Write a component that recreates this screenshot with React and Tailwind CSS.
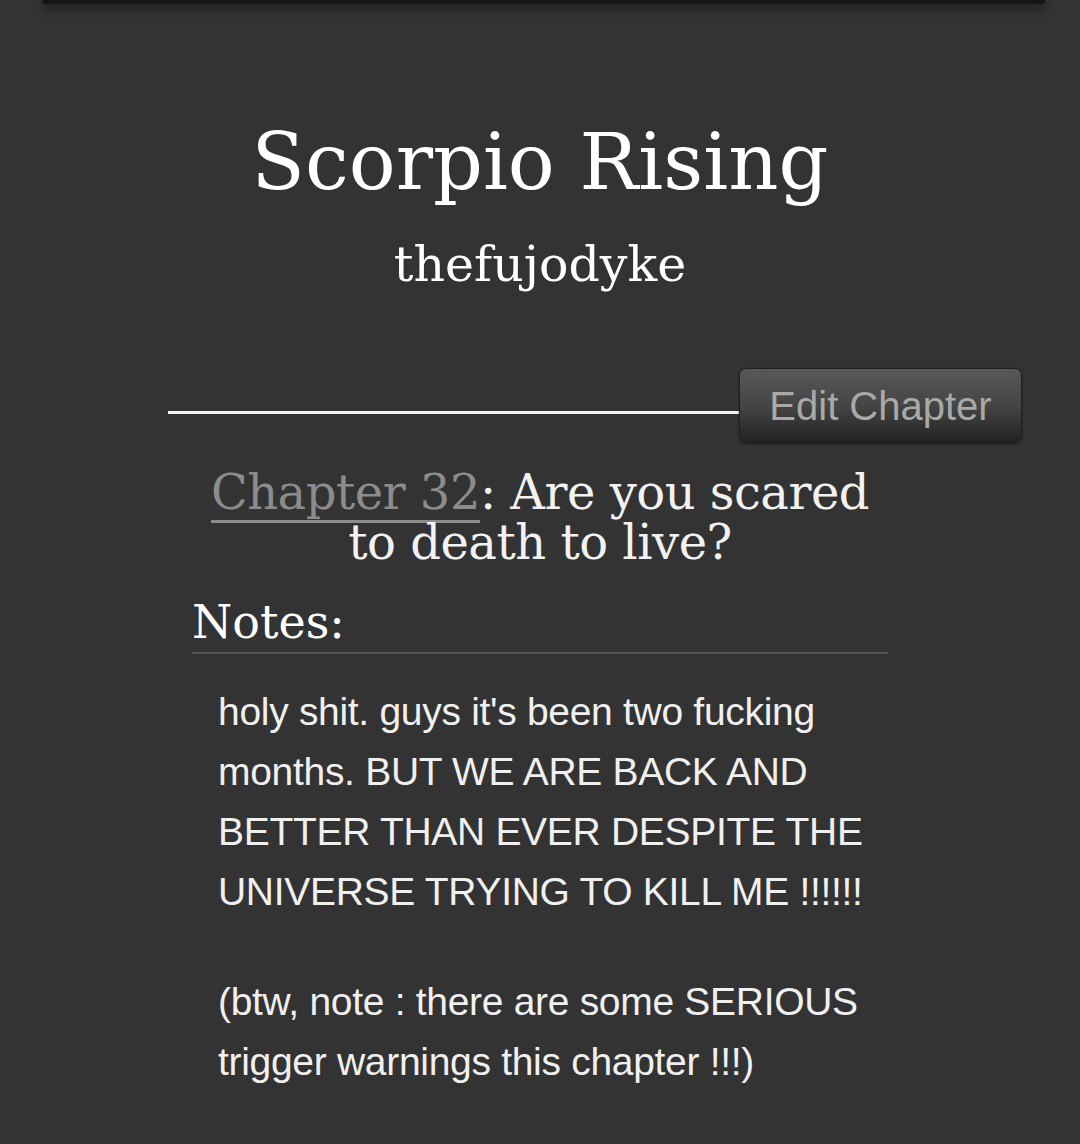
import React from 'react'

const serif = { fontFamily: '"DejaVu Serif", "Liberation Serif", serif' }
const sans = { fontFamily: '"Liberation Sans", Arial, sans-serif' }

const noteLines = [
  "holy shit. guys it's been two fucking",
  'months. BUT WE ARE BACK AND',
  'BETTER THAN EVER DESPITE THE',
  'UNIVERSE TRYING TO KILL ME !!!!!!',
]

const warnLines = ['(btw, note : there are some SERIOUS', 'trigger warnings this chapter !!!)']

export default function App() {
  return (
    <div className="min-h-[1144px] w-[1080px] bg-[#333333] overflow-hidden">
      {/* top bar */}
      <div className="ml-[42px] mr-[35px] h-[4px] bg-[#151515] shadow-[0_4px_10px_rgba(0,0,0,0.7)] rounded-b" />

      <header className="pt-[110px] text-center text-white" style={serif}>
        <h1 className="text-[78px] leading-[96px]">Scorpio Rising</h1>
        <p className="mt-[25px] text-[49px] leading-[60px]">thefujodyke</p>
      </header>

      <div className="mt-[73px] flex items-start pl-[168px] pr-[58px]">
        <div className="mt-[43px] h-[3px] flex-1 bg-[#f2f2f2]" />
        <button
          className="h-[75px] w-[283px] rounded-[7px] border border-[#1e1e1e] bg-gradient-to-b from-[#585858] via-[#454545] to-[#242424] text-[40px] text-[#a9a9a9] shadow-[0_1px_2px_rgba(0,0,0,0.5)]"
          style={sans}
        >
          Edit Chapter
        </button>
      </div>

      <h2 className="mt-[24px] text-center text-[48px] leading-[50px] tracking-[-0.5px] text-[#f2f2f2]" style={serif}>
        <span className="border-b-[3px] border-[#8c8c8c] text-[#8c8c8c]">Chapter 32</span>: Are you scared
        <br />
        to death to live?
      </h2>

      <div className="mx-[192px] mt-[25px]">
        <h3 className="border-b-2 border-[#555555] text-[46px] leading-[60px] text-white" style={serif}>
          Notes:
        </h3>
        <div
          className="mt-[28px] pl-[26px] text-[39px] leading-[60px] tracking-[-0.3px] text-[#f0f0f0] whitespace-nowrap"
          style={sans}
        >
          {noteLines.map((l) => (
            <p key={l}>{l}</p>
          ))}
          <div className="mt-[50px]">
            {warnLines.map((l) => (
              <p key={l}>{l}</p>
            ))}
          </div>
        </div>
      </div>
    </div>
  )
}
